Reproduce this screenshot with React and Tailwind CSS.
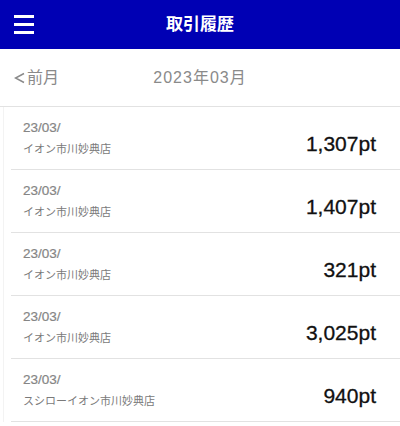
import React from "react";

const rows = [
  { date: "23/03/", store: "イオン市川妙典店", pt: "1,307pt" },
  { date: "23/03/", store: "イオン市川妙典店", pt: "1,407pt" },
  { date: "23/03/", store: "イオン市川妙典店", pt: "321pt" },
  { date: "23/03/", store: "イオン市川妙典店", pt: "3,025pt" },
  { date: "23/03/", store: "スシローイオン市川妙典店", pt: "940pt" },
];

const font = { fontFamily: '"Liberation Sans", "Noto Sans CJK JP", sans-serif' };

export default function App() {
  return (
    <div className="w-[400px] h-[426px] overflow-hidden bg-white" style={font}>
      <header className="h-[49px] bg-[#0000b4] grid grid-cols-[1fr_auto_1fr] items-center">
        <div className="pl-[14px] flex flex-col gap-[5px]">
          <span className="block w-[20px] h-[3px] bg-white" />
          <span className="block w-[20px] h-[3px] bg-white" />
          <span className="block w-[20px] h-[3px] bg-white" />
        </div>
        <h1 className="text-white text-[17px] font-bold leading-none">取引履歴</h1>
        <div />
      </header>
      <div className="h-[58px] grid grid-cols-[1fr_auto_1fr] items-center border-b border-[#e2e2e2] text-[#8a8a8a] text-[16px]">
        <div className="pl-[14px] flex items-center">
          <svg width="11" height="12" viewBox="0 0 11 12" className="mr-[2px]">
            <path d="M10 1.5 L1.5 6 L10 10.5" fill="none" stroke="#8a8a8a" strokeWidth="1.5" strokeLinejoin="miter" />
          </svg>
          <span>前月</span>
        </div>
        <div className="tracking-[1px]">2023年03月</div>
        <div />
      </div>
      <div className="pl-[3px]">
        <div className="border-l border-[#f3f3f3] pl-[7px]">
          {rows.map((r, i) => (
            <div
              key={i}
              className="h-[63px] flex items-center justify-between border-b border-[#e2e2e2] pl-[12px] pr-[24px]"
            >
              <div className="flex flex-col gap-[6px]">
                <span className="text-[13.5px] leading-[16px] text-[#858585] [-webkit-text-stroke:0.2px_#858585]">{r.date}</span>
                <span className="text-[11px] leading-[14px] text-[#7a7a7a]">{r.store}</span>
              </div>
              <div className="mt-[12px] text-[21px] leading-[24px] text-[#111] [-webkit-text-stroke:0.3px_#111]">{r.pt}</div>
            </div>
          ))}
        </div>
      </div>
    </div>
  );
}
